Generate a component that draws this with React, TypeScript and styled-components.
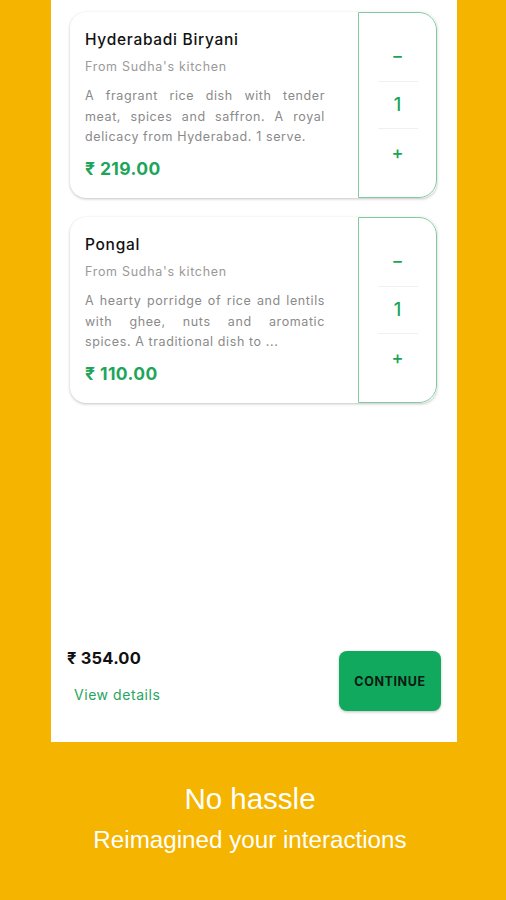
import React from "react";
import styled, { createGlobalStyle } from "styled-components";

const Global = createGlobalStyle`
  html, body { margin: 0; padding: 0; }
  body {
    background: #f4b400;
    font-family: Inter, "Noto Sans", sans-serif;
    -webkit-font-smoothing: antialiased;
  }
`;

const Screen = styled.div`
  width: 506px;
  height: 900px;
  background: #f4b400;
  display: flex;
  flex-direction: column;
  align-items: center;
  overflow: hidden;
`;

const Panel = styled.div`
  width: 406px;
  height: 742px;
  margin-left: 2px;
  background: #ffffff;
  display: flex;
  flex-direction: column;
  box-sizing: border-box;
  padding: 12px 20px 31px 19px;
`;

const List = styled.div`
  display: flex;
  flex-direction: column;
  gap: 19px;
`;

const Card = styled.div`
  display: flex;
  height: 186px;
  border-radius: 16px;
  background: #fff;
  box-shadow: 0 1px 3px rgba(0, 0, 0, 0.24);
  box-sizing: border-box;
`;

const Info = styled.div`
  flex: 1;
  padding: 15px 33px 0 15px;
  display: flex;
  flex-direction: column;
`;

const Title = styled.div`
  font-size: 15.5px;
  font-weight: 500;
  color: #111;
  line-height: 26px;
  letter-spacing: 0.7px;
`;

const Kitchen = styled.div`
  font-size: 12.5px;
  color: #9a9a9a;
  margin-top: 4px;
  line-height: 20px;
  letter-spacing: 0.7px;
`;

const Desc = styled.div`
  margin-top: 9px;
  font-size: 12.5px;
  color: #8a8a8a;
  line-height: 20.5px;
  letter-spacing: 0.6px;
`;

const Line = styled.span<{ $last?: boolean }>`
  display: block;
  text-align: ${(p) => (p.$last ? "left" : "justify")};
  text-align-last: ${(p) => (p.$last ? "left" : "justify")};
  white-space: nowrap;
`;

const Price = styled.div`
  margin-top: 9px;
  font-size: 17.5px;
  font-weight: 700;
  color: #1ea55b;
  line-height: 24px;
  letter-spacing: 0.4px;
`;

const Stepper = styled.div`
  width: 79px;
  border: 1.5px solid #7fcb9c;
  border-radius: 0 18px 18px 0;
  display: flex;
  flex-direction: column;
  justify-content: center;
  align-items: center;
  box-sizing: border-box;
`;

const StepCell = styled.div<{ $shift?: number }>`
  height: 46px;
  width: 100%;
  display: flex;
  align-items: center;
  justify-content: center;
  color: #17a457;
  font-size: 18px;
  font-weight: 500;
  padding-bottom: ${(p) => p.$shift ?? 0}px;
  box-sizing: border-box;
`;

const Divider = styled.div`
  width: 40px;
  height: 1px;
  background: #f0f0f0;
`;

const Footer = styled.div`
  margin-top: auto;
  display: flex;
  justify-content: space-between;
  align-items: flex-start;
  margin-left: -3px;
  margin-right: -4px;
`;

const Totals = styled.div`
  display: flex;
  flex-direction: column;
`;

const Total = styled.div`
  font-size: 16.5px;
  font-weight: 700;
  color: #111;
  line-height: 14px;
  margin-top: -7px;
  letter-spacing: 0.2px;
`;

const Details = styled.div`
  font-size: 14px;
  color: #27a560;
  margin-top: 22px;
  margin-left: 7px;
  line-height: 16px;
  letter-spacing: 0.55px;
`;

const ContinueButton = styled.button`
  width: 102px;
  height: 60px;
  margin-top: -7px;
  border: none;
  border-radius: 8px;
  background: #11a95e;
  color: #0d1a12;
  font-family: Inter, "Noto Sans", sans-serif;
  font-size: 12.5px;
  font-weight: 700;
  letter-spacing: 0.6px;
  box-shadow: 0 1px 3px rgba(0, 0, 0, 0.25);
`;

const Caption = styled.div`
  flex: 1;
  display: flex;
  flex-direction: column;
  align-items: center;
  padding-right: 6px;
  color: #ffffff;
  font-family: "Liberation Sans", Arial, sans-serif;
`;

const Headline = styled.div`
  margin-top: 40px;
  font-size: 29.5px;
  line-height: 34px;
`;

const Subline = styled.div`
  margin-top: 10px;
  font-size: 24.2px;
  line-height: 28px;
`;

type Item = {
  name: string;
  lines: string[];
  price: string;
};

const items: Item[] = [
  {
    name: "Hyderabadi Biryani",
    lines: [
      "A fragrant rice dish with tender",
      "meat, spices and saffron. A royal",
      "delicacy from Hyderabad. 1 serve.",
    ],
    price: "₹ 219.00",
  },
  {
    name: "Pongal",
    lines: [
      "A hearty porridge of rice and lentils",
      "with ghee, nuts and aromatic",
      "spices. A traditional dish to ...",
    ],
    price: "₹ 110.00",
  },
];

export default function App() {
  return (
    <Screen>
      <Global />
      <Panel>
        <List>
          {items.map((it) => (
            <Card key={it.name}>
              <Info>
                <Title>{it.name}</Title>
                <Kitchen>From Sudha's kitchen</Kitchen>
                <Desc>
                  {it.lines.map((l, i) => (
                    <Line key={i} $last={i === it.lines.length - 1}>
                      {l}
                    </Line>
                  ))}
                </Desc>
                <Price>{it.price}</Price>
              </Info>
              <Stepper>
                <StepCell $shift={5}>−</StepCell>
                <Divider />
                <StepCell $shift={2}>1</StepCell>
                <Divider />
                <StepCell>+</StepCell>
              </Stepper>
            </Card>
          ))}
        </List>
        <Footer>
          <Totals>
            <Total>₹ 354.00</Total>
            <Details>View details</Details>
          </Totals>
          <ContinueButton>CONTINUE</ContinueButton>
        </Footer>
      </Panel>
      <Caption>
        <Headline>No hassle</Headline>
        <Subline>Reimagined your interactions</Subline>
      </Caption>
    </Screen>
  );
}
